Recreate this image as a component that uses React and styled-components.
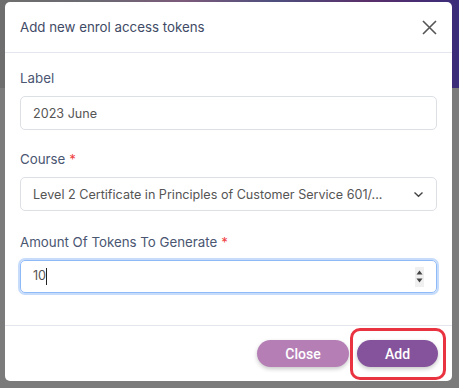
import React from "react";
import styled, { createGlobalStyle } from "styled-components";

const GlobalStyle = createGlobalStyle`
  html, body {
    margin: 0;
    padding: 0;
    width: 459px;
    height: 388px;
    overflow: hidden;
    font-family: Inter, Roboto, "Liberation Sans", sans-serif;
  }
`;

const Backdrop = styled.div`
  width: 459px;
  height: 388px;
  box-sizing: border-box;
  padding: 2px 7px 7px 5px;
  background:
    linear-gradient(90deg, #6e6e6e 0 2%, #6a6a72 20%, #7c5a7a 40%, #4e4f7e 60%, #5a2f6a 80%, #3a2c7a 100%) top / 100% 88px no-repeat,
    #7b7b7b;
  display: flex;
`;

const Modal = styled.div`
  flex: 1;
  background: #fff;
  border-radius: 5px;
  display: flex;
  flex-direction: column;
`;

const Header = styled.div`
  height: 50px;
  display: flex;
  align-items: center;
  justify-content: space-between;
  padding: 0 14px 0 15px;
  border-bottom: 1px solid #e3e6ec;
`;

const Title = styled.h5`
  margin: 0;
  font-size: 13.3px;
  font-weight: 400;
  color: #3f4b66;
`;

const CloseIcon = styled.button`
  border: none;
  background: none;
  padding: 0;
  width: 18px;
  height: 18px;
  display: flex;
  align-items: center;
  justify-content: center;
  cursor: pointer;
`;

const Body = styled.div`
  flex: 1;
  padding: 15px 15px 0 15px;
  display: flex;
  flex-direction: column;
  border-bottom: 1px solid #e3e6ec;
`;

const Field = styled.div`
  display: flex;
  flex-direction: column;
  margin-bottom: ${(p) => p.$mb || 0}px;
`;

const Label = styled.label`
  font-size: 13.3px;
  color: #4a5672;
  margin: 2px 0 10px;
  line-height: 16px;
`;

const Required = styled.span`
  color: #ef4444;
  margin-left: 4px;
`;

const Control = styled.div`
  height: ${(p) => (p.$focused ? 33 : 34)}px;
  box-sizing: border-box;
  border: 1px solid ${(p) => (p.$focused ? "#8fbaf8" : "#dcdfe4")};
  box-shadow: ${(p) => (p.$focused ? "0 0 0 2px #c7dcfb" : "none")};
  border-radius: 5px;
  display: flex;
  align-items: center;
  padding: 0 12px;
  font-size: 12.6px;
  color: #555;
`;

const Value = styled.span`
  flex: 1;
  white-space: nowrap;
  overflow: hidden;
  text-overflow: ellipsis;
`;

const Caret = styled.span`
  display: inline-block;
  width: 1px;
  height: 17px;
  background: #222;
  vertical-align: middle;
`;

const Spinner = styled.div`
  width: 9px;
  height: 20px;
  background: #f0f0f0;
  display: flex;
  flex-direction: column;
  align-items: center;
  justify-content: center;
  gap: 3px;
`;

const Footer = styled.div`
  height: 55px;
  display: flex;
  align-items: center;
  justify-content: flex-end;
  gap: 8px;
  padding: 0 14px 0 0;
`;

const Button = styled.button`
  height: 27px;
  width: ${(p) => p.$w}px;
  border: none;
  border-radius: 14px;
  background: ${(p) => p.$bg};
  color: #fff;
  font-family: Roboto, "Liberation Sans", sans-serif;
  font-size: 14px;
  font-weight: 500;
  box-shadow: 0 2px 4px rgba(0, 0, 0, 0.22);
  cursor: pointer;
`;

const Highlight = styled.div`
  position: relative;
  display: flex;

  &::after {
    content: "";
    position: absolute;
    left: -7px;
    right: -8px;
    top: -12px;
    bottom: -13px;
    border: 3px solid #ea3340;
    border-radius: 10px;
    pointer-events: none;
  }
`;

function Chevron() {
  return (
    <svg width="11" height="7" viewBox="0 0 11 7">
      <path d="M1.5 1.5 L5.5 5.2 L9.5 1.5" stroke="#444" strokeWidth="1.4" fill="none" />
    </svg>
  );
}

export default function App() {
  return (
    <>
      <GlobalStyle />
      <Backdrop>
        <Modal>
          <Header>
            <Title>Add new enrol access tokens</Title>
            <CloseIcon aria-label="close">
              <svg width="15" height="15" viewBox="0 0 15 15">
                <path d="M1 1 L14 14 M14 1 L1 14" stroke="#555" strokeWidth="1.6" />
              </svg>
            </CloseIcon>
          </Header>
          <Body>
            <Field $mb={19}>
              <Label>Label</Label>
              <Control>
                <Value>2023 June</Value>
              </Control>
            </Field>
            <Field $mb={21}>
              <Label>
                Course<Required>*</Required>
              </Label>
              <Control>
                <Value>Level 2 Certificate in Principles of Customer Service 601/...</Value>
                <span style={{ width: 10 }} />
                <Chevron />
              </Control>
            </Field>
            <Field>
              <Label>
                Amount Of Tokens To Generate<Required>*</Required>
              </Label>
              <Control $focused>
                <Value>
                  10<Caret />
                </Value>
                <Spinner>
                  <svg width="7" height="5" viewBox="0 0 7 5">
                    <path d="M0.5 4.5 L3.5 0.5 L6.5 4.5 Z" fill="#444" />
                  </svg>
                  <svg width="7" height="5" viewBox="0 0 7 5">
                    <path d="M0.5 0.5 L3.5 4.5 L6.5 0.5 Z" fill="#444" />
                  </svg>
                </Spinner>
              </Control>
            </Field>
          </Body>
          <Footer>
            <Button $bg="#b57fb6" $w={92}>Close</Button>
            <Highlight>
              <Button $bg="#84539b" $w={81}>Add</Button>
            </Highlight>
          </Footer>
        </Modal>
      </Backdrop>
    </>
  );
}
